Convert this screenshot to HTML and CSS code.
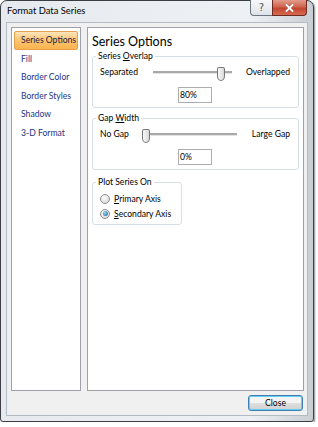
FILE: index.html
```html
<!DOCTYPE html>
<html lang="en">
<head>
    <meta charset="UTF-8">
    <meta name="viewport" content="width=device-width, initial-scale=1.0">
    <title>Format Data Series</title>
    <link rel="stylesheet" href="styles.css">
</head>
<body>
    <div class="window">
        <div class="titlebar">
            <span class="title">Format Data Series</span>
            <div class="caption-buttons">
                <button class="cap-btn help">?</button>
                <button class="cap-btn close">
                    <svg width="9" height="8" viewBox="0 0 9 8">
                        <path d="M1.5 1 L7.5 7 M7.5 1 L1.5 7" stroke="#5a1a10" stroke-width="3" stroke-linecap="square" opacity="0.5"/>
                        <path d="M1.5 1 L7.5 7 M7.5 1 L1.5 7" stroke="#fff" stroke-width="2" stroke-linecap="square"/>
                    </svg>
                </button>
            </div>
        </div>

        <div class="client">
            <div class="panes">
                <ul class="nav">
                    <li class="active">Series Options</li>
                    <li>Fill</li>
                    <li>Border Color</li>
                    <li>Border Styles</li>
                    <li>Shadow</li>
                    <li>3-D Format</li>
                </ul>

                <div class="options">
                    <h1>Series Options</h1>

                    <fieldset class="group">
                        <legend>Series <u>O</u>verlap</legend>
                        <div class="slider-row overlap">
                            <span>Separated</span>
                            <div class="track"><span class="thumb" style="--pos: 0.9"></span></div>
                            <span class="end">Overlapped</span>
                        </div>
                        <div class="value"><input type="text" value="80%"></div>
                    </fieldset>

                    <fieldset class="group">
                        <legend>Gap <u>W</u>idth</legend>
                        <div class="slider-row gap">
                            <span>No Gap</span>
                            <div class="track"><span class="thumb" style="--pos: 0"></span></div>
                            <span class="end">Large Gap</span>
                        </div>
                        <div class="value"><input type="text" value="0%"></div>
                    </fieldset>

                    <fieldset class="group plot">
                        <legend>Plot Series On</legend>
                        <label class="radio-row"><span class="radio"></span><u>P</u>rimary Axis</label>
                        <label class="radio-row"><span class="radio checked"></span><u>S</u>econdary Axis</label>
                    </fieldset>
                </div>
            </div>

            <div class="footer">
                <button class="btn">Close</button>
            </div>
        </div>
    </div>
</body>
</html>
```

FILE: styles.css
```css
body {
    margin: 0;
    background: #fff;
    font-family: Lato, "Open Sans", sans-serif;
    font-size: 8.6px;
    color: #000;
}

.window {
    box-sizing: border-box;
    width: 314px;
    height: 422px;
    border: 1px solid #3b3f44;
    border-radius: 7px 7px 3px 3px;
    background: linear-gradient(90deg, #e6eaee, #eef1f4 80%, #c9ced3);
    display: flex;
    flex-direction: column;
    padding: 0 5px 5px 5px;
    box-shadow: 1px 1px 2px rgba(0, 0, 0, 0.45);
}

.titlebar {
    height: 21px;
    display: flex;
    align-items: flex-start;
}

.title {
    margin: 4px 0 0 1px;
    font-size: 9.4px;
    line-height: 12px;
}

.caption-buttons {
    margin-left: auto;
    margin-right: 1px;
    margin-top: -1px;
    display: flex;
}

.cap-btn {
    height: 16px;
    padding: 0;
    border: 1px solid #6b7580;
    border-top: none;
    display: flex;
    align-items: center;
    justify-content: center;
}

.help {
    width: 22px;
    border-right: none;
    border-radius: 0 0 0 4px;
    background: linear-gradient(#f6f7f9, #dfe3e8);
    color: #555;
    font-family: "DejaVu Sans", sans-serif;
    font-size: 10px;
}

.close {
    width: 35px;
    border-color: #6d2a20;
    border-radius: 0 0 4px 0;
    background: linear-gradient(#e39c8c, #d0644f 45%, #c4452f 55%, #d66b50);
}

.client {
    flex: 1;
    background: #f0f0f0;
    border: 1px solid #b3bcc5;
    display: flex;
    flex-direction: column;
    padding: 4px 3px 4px 4px;
}

.panes {
    flex: 1;
    display: flex;
    gap: 6px;
    min-height: 0;
}

.nav {
    box-sizing: border-box;
    width: 70px;
    margin: 0;
    padding: 3px 2px;
    list-style: none;
    background: #fff;
    border: 1px solid #a0a0a8;
}

.nav li {
    box-sizing: border-box;
    height: 18.5px;
    line-height: 16.5px;
    padding-left: 6px;
    border: 1px solid transparent;
    color: #1e3485;
    white-space: nowrap;
}

.nav li.active {
    background: linear-gradient(#fee5bb, #fdc676 45%, #fbb34c);
    border-color: #e3a04e;
    border-radius: 2px;
    color: #22203a;
}

.options {
    flex: 1;
    background: #fff;
    border: 1px solid #a0a0a8;
    padding: 0 4px;
}

.options h1 {
    margin: 6px 0 0 0;
    font-size: 12.5px;
    font-weight: normal;
    line-height: 16px;
}

.group {
    margin: 1px 0 0 0;
    padding: 0 7px 4px 7px;
    border: 1px solid #d5dfe5;
    border-radius: 3px;
}

.group + .group {
    margin-top: 5px;
}

.group legend {
    margin-left: -4px;
    padding: 0 2px;
    line-height: 11px;
}

.slider-row {
    display: grid;
    align-items: center;
    height: 14px;
    margin-top: 3px;
}

.slider-row.overlap {
    grid-template-columns: 53px 79px 1fr;
}

.slider-row.gap {
    grid-template-columns: 42px 95px 1fr;
}

.slider-row .end {
    justify-self: end;
    margin-right: 1px;
}

.track {
    position: relative;
    height: 2px;
    background: #a9a9a9;
    border-bottom: 1px solid #e4e4e4;
}

.thumb {
    position: absolute;
    top: -4px;
    left: calc(var(--pos) * (100% - 8px));
    box-sizing: border-box;
    width: 8px;
    height: 14px;
    border: 1px solid #777;
    border-radius: 2px 2px 4px 4px / 2px 2px 5px 5px;
    background: linear-gradient(90deg, #fafafa, #d9d9d9);
}

.value {
    display: flex;
    justify-content: center;
    margin-top: 8px;
}

.value input {
    box-sizing: border-box;
    width: 34px;
    height: 16px;
    margin: 0 1px 0 0;
    padding: 0 1px;
    border: 1px solid #abadb3;
    font-family: inherit;
    font-size: 8.6px;
    color: #000;
}

.group.plot {
    width: 90px;
    box-sizing: border-box;
    margin-top: 7px;
    padding-bottom: 3px;
}

.radio-row {
    display: flex;
    align-items: center;
    height: 15px;
}

.radio-row:first-of-type {
    margin-top: 3px;
}

.radio {
    box-sizing: border-box;
    width: 10px;
    height: 10px;
    margin-right: 4px;
    border: 1px solid #8e8f8f;
    border-radius: 50%;
    background: radial-gradient(circle at 40% 35%, #fdfdfd, #d0d0d0);
    display: flex;
    align-items: center;
    justify-content: center;
}

.radio.checked::after {
    content: "";
    width: 5px;
    height: 5px;
    border-radius: 50%;
    background: radial-gradient(circle at 40% 35%, #8fd8f8, #1b5f95);
}

.footer {
    display: flex;
    justify-content: flex-end;
    margin-top: 4px;
}

.btn {
    box-sizing: border-box;
    width: 55px;
    height: 16px;
    margin-right: 1px;
    padding: 0;
    border: 1px solid #3c7fb1;
    border-radius: 3px;
    background: linear-gradient(#f4f4f4 50%, #e0e0e0 50%, #d0d0d0);
    box-shadow: inset 0 0 0 1px #67cdf2;
    font-family: inherit;
    font-size: 8.6px;
    color: #000;
}
```
